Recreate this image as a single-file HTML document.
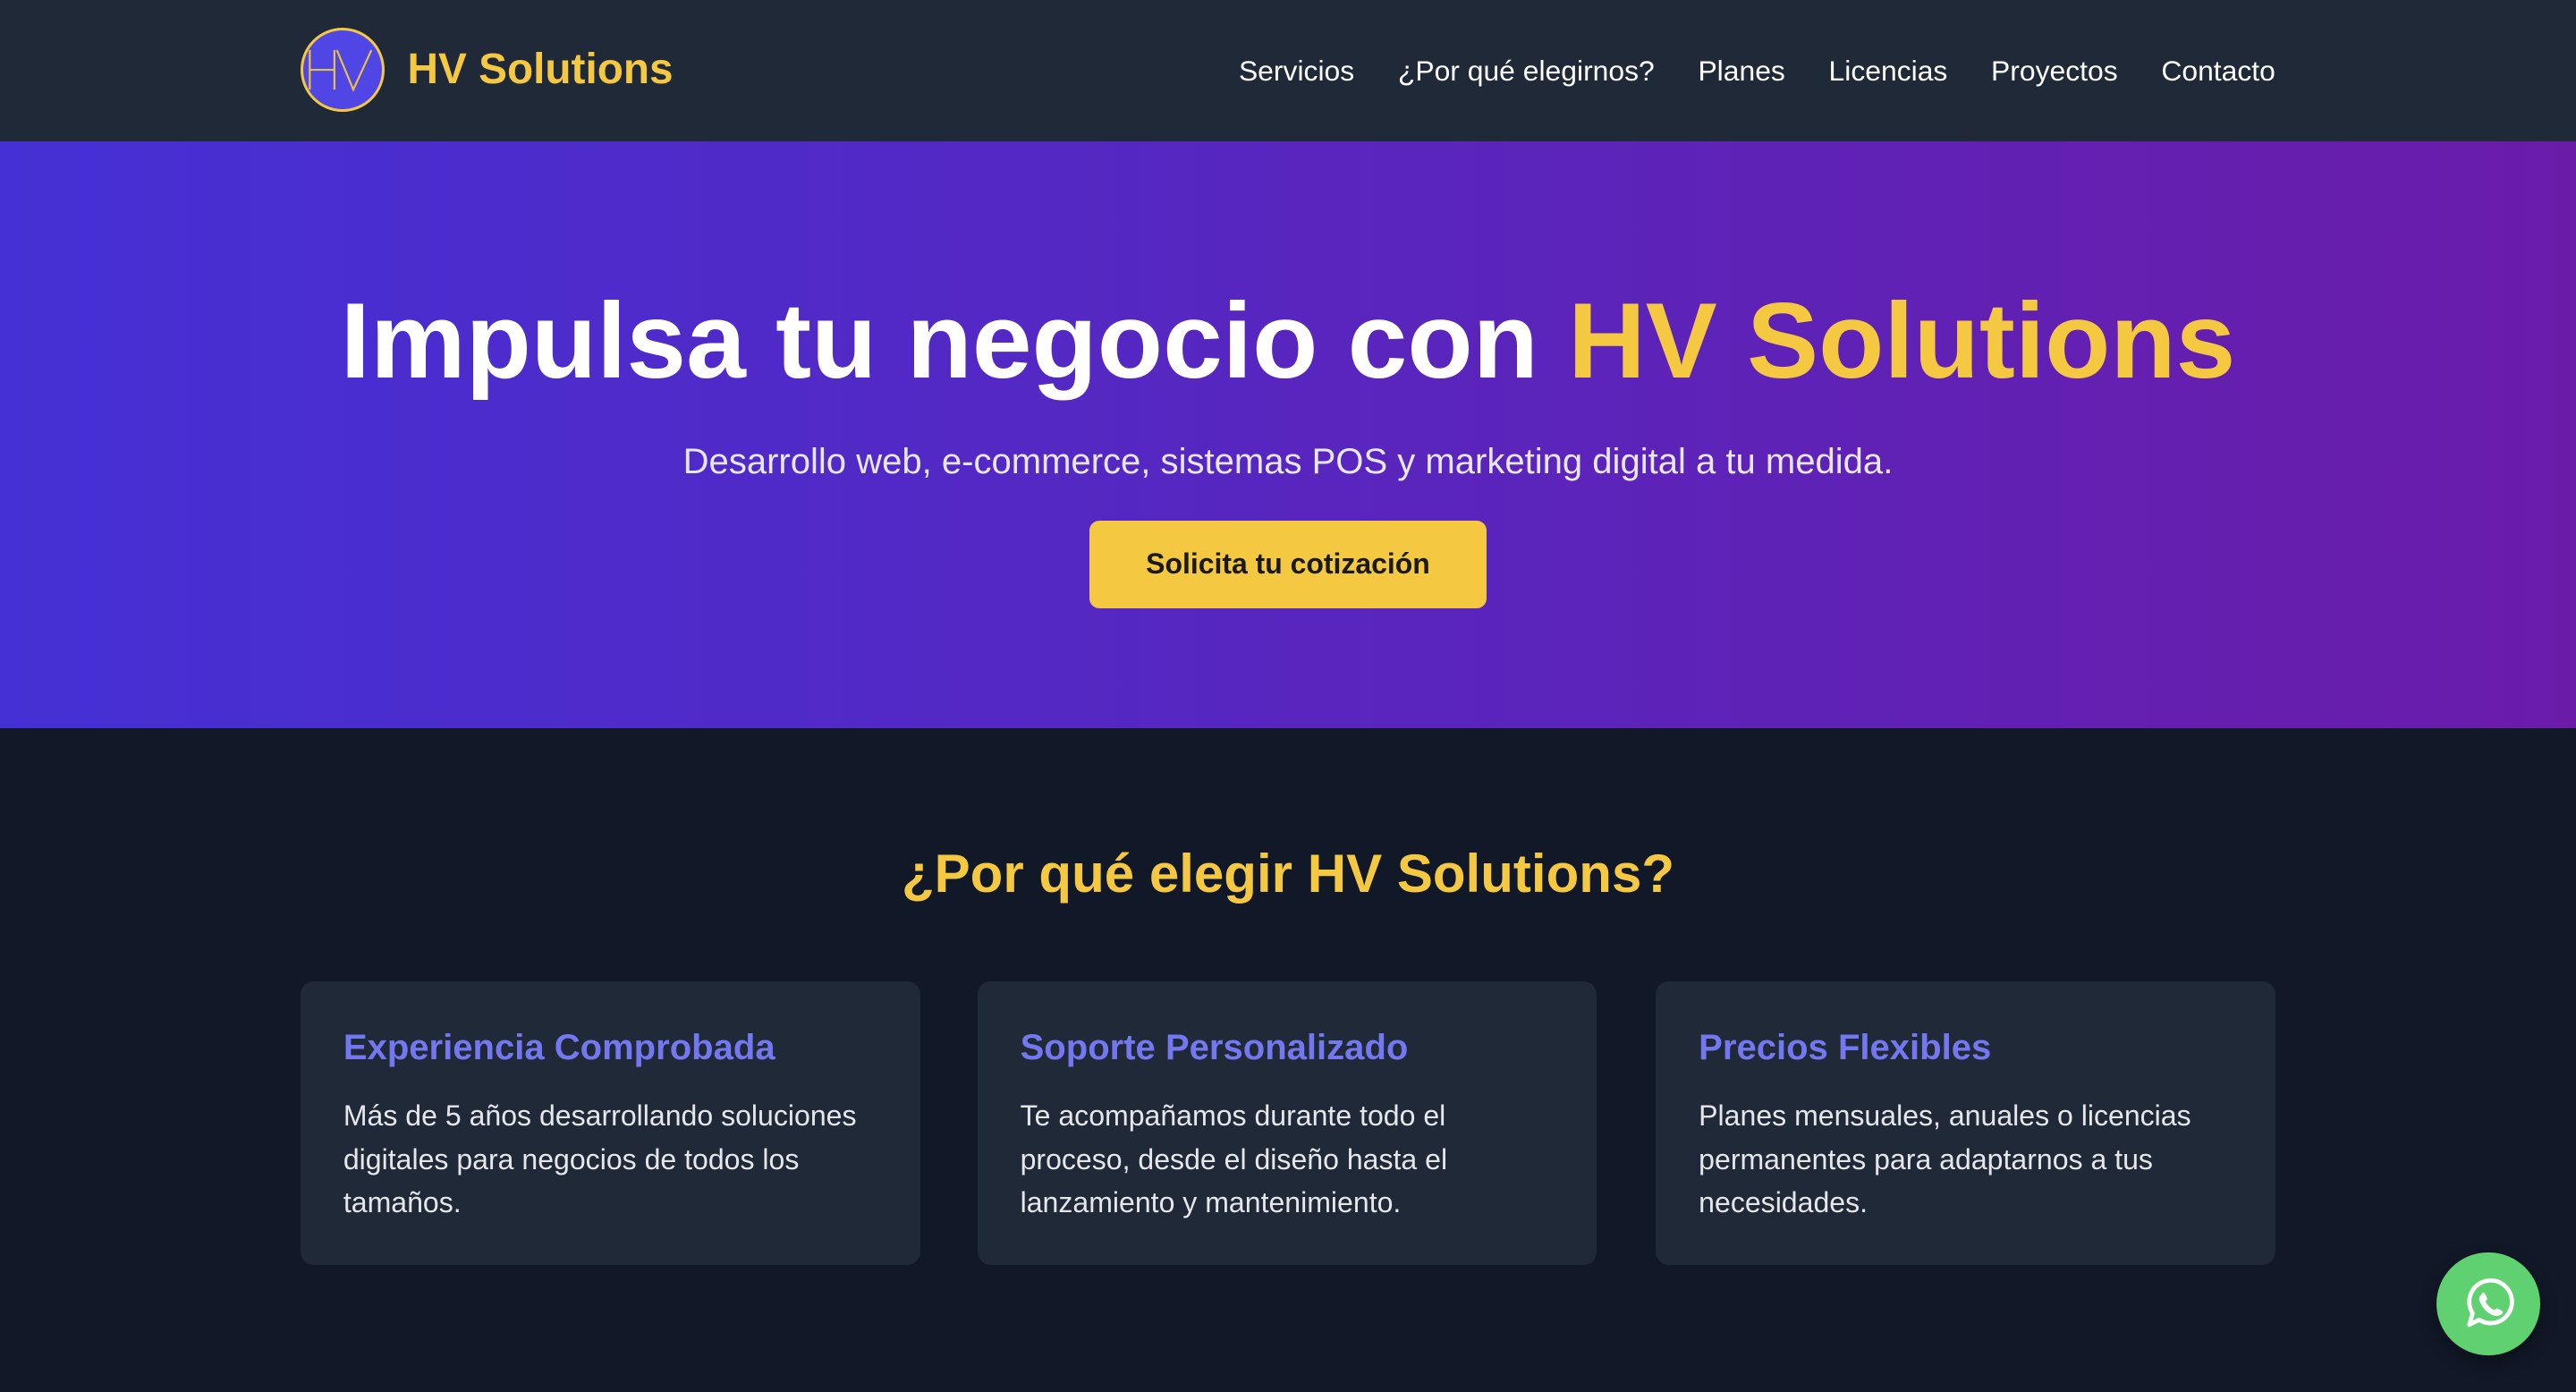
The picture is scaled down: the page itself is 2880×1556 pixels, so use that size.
<!DOCTYPE html>
<html><head><meta charset="utf-8">
<style>
html,body{margin:0;padding:0}
body{width:1568px;height:847px;overflow:hidden;zoom:1.83673;background:#111827;font-family:"Liberation Sans",Arial,sans-serif;position:relative}
.nav{height:86px;background:#1f2937;position:relative}
.logo{position:absolute;left:183px;top:17px;width:48px;height:48px;border:2px solid #f5c842;border-radius:50%;background:#4f46e5}
.brand{position:absolute;left:248px;top:27px;font-size:26px;font-weight:bold;color:#f5c842}
.links{position:absolute;right:183px;top:33px;font-size:17.35px;color:#fff;display:flex;gap:26.5px}
.hero{height:357px;background:linear-gradient(90deg,#4530d5,#6a1ca9);text-align:center;position:relative}
.hero h1{margin:0;position:absolute;left:0;right:0;top:84px;font-size:65.3px;font-weight:bold;color:#fff;line-height:76px}
.hero h1 span{color:#f5c842}
.hero p{margin:0;position:absolute;left:0;right:0;top:183px;font-size:21.8px;color:#e8e6fa}
.btn{position:absolute;left:663px;top:231px;width:242px;height:53px;background:#f5c842;border-radius:6px;font-size:17.4px;font-weight:bold;color:#1a1a1a;line-height:53px;text-align:center}
h2{position:absolute;left:0;right:0;top:513px;margin:0;text-align:center;font-size:32.7px;color:#f5c842;font-weight:bold}
.card{position:absolute;top:597px;width:325px;height:173px;background:#1f2937;border-radius:8px;padding:0 26px}
.card h3{margin:28px 0 0;font-size:21.8px;color:#7478f0;font-weight:bold;line-height:26px}
.card p{margin:15px 0 0;font-size:17.45px;color:#e5e7eb;line-height:26.3px}
.wa{position:absolute;left:1483px;top:762px;width:63px;height:63px;border-radius:50%;background:#5fd171;box-shadow:0 4px 10px rgba(0,0,0,.35)}
</style></head><body>
<div class="nav">
<div class="logo"><svg width="48" height="48" viewBox="0 0 48 48"><path d="M4 12V36M19 12V36M4 24H19M20.5 12L30.5 36L41.5 12" fill="none" stroke="#e8c045" stroke-width="1.2"/></svg></div>
<div class="brand">HV Solutions</div>
<div class="links"><span>Servicios</span><span>¿Por qué elegirnos?</span><span>Planes</span><span>Licencias</span><span>Proyectos</span><span>Contacto</span></div>
</div>
<div class="hero">
<h1>Impulsa tu negocio con <span>HV Solutions</span></h1>
<p>Desarrollo web, e-commerce, sistemas POS y marketing digital a tu medida.</p>
<div class="btn">Solicita tu cotización</div>
</div>
<h2>¿Por qué elegir HV Solutions?</h2>
<div class="card" style="left:183px"><h3>Experiencia Comprobada</h3><p>Más de 5 años desarrollando soluciones digitales para negocios de todos los tamaños.</p></div>
<div class="card" style="left:595px"><h3>Soporte Personalizado</h3><p>Te acompañamos durante todo el proceso, desde el diseño hasta el lanzamiento y mantenimiento.</p></div>
<div class="card" style="left:1008px"><h3>Precios Flexibles</h3><p>Planes mensuales, anuales o licencias permanentes para adaptarnos a tus necesidades.</p></div>
<div class="wa"><svg width="63" height="63" viewBox="0 0 63 63"><path d="M20 44 L22 37 A13 13 0 1 1 26 41 Z" fill="none" stroke="#fff" stroke-width="2.6" stroke-linejoin="round"/><path d="M27 26c1-2 2-2 3 0l1 2c0 1-1 1-1 2 1 2 3 4 5 5 1 0 1-1 2-1l2 1c2 1 2 2 0 3-2 1-4 1-7-1-3-2-5-5-6-8 0-1 0-2 1-3z" fill="#fff"/></svg></div>
</body></html>
